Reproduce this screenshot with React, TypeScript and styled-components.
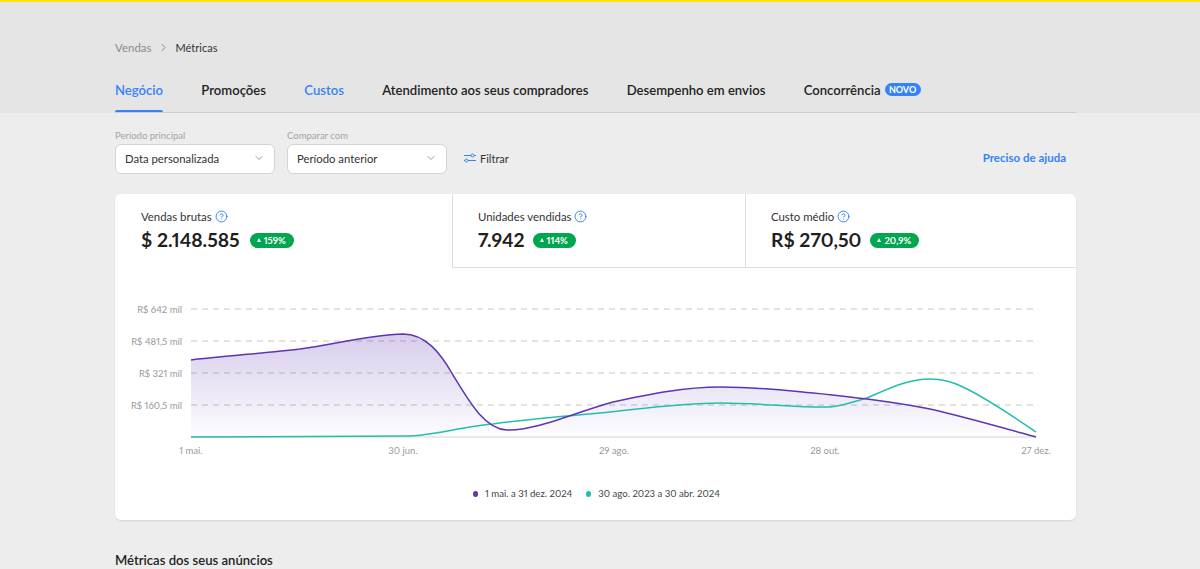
import React from "react";
import styled, { createGlobalStyle } from "styled-components";
import { ChevronDown, ChevronRight, CircleHelp } from "lucide-react";

const GlobalStyle = createGlobalStyle`
  html, body { margin: 0; height: 100%; overflow: hidden; background: #ededed; }
  body { font-family: "Lato", "Liberation Sans", sans-serif; color: #1f1f1f; font-variant-numeric: proportional-nums; }
`;

const blue = "#3483fa";

const Page = styled.div`
  border-top: 2px solid #ffe600;
  height: 567px;
  overflow: hidden;
`;

const Header = styled.header`
  background: #e5e5e5;
  height: 111px;
  padding-left: 115px;
  box-sizing: border-box;
  display: flex;
  flex-direction: column;
`;

const Breadcrumb = styled.nav`
  display: flex;
  align-items: center;
  height: 16px;
  margin-top: 37px;
  font-size: 11.5px;
  color: #8a8a8a;
  svg { margin: 0 6px 0 5px; color: #777; }
`;

const Current = styled.span`
  color: #333;
  font-size: 11px;
`;

const Tabs = styled.div`
  display: flex;
  gap: 38.3px;
  width: 961px;
  height: 58px;
  box-sizing: border-box;
  border-bottom: 1px solid #cfcfcf;
`;

const Tab = styled.div<{ $blue?: boolean; $active?: boolean }>`
  position: relative;
  display: flex;
  align-items: center;
  height: 57px;
  padding-top: 12px;
  box-sizing: border-box;
  font-size: 13.1px;
  font-weight: 600;
  white-space: nowrap;
  color: ${(p) => (p.$blue ? blue : "#222")};
  ${(p) =>
    p.$active &&
    `&::after {
      content: "";
      position: absolute;
      left: 0;
      right: 0;
      bottom: 0;
      height: 2px;
      border-radius: 2px 2px 0 0;
      background: ${blue};
    }`}
`;

const NewBadge = styled.span`
  margin-left: 4px;
  height: 13px;
  width: 36px;
  border-radius: 7px;
  background: ${blue};
  color: #fff;
  font-size: 9px;
  font-weight: 700;
  line-height: 13px;
  text-align: center;
`;

const Content = styled.main`
  margin-left: 115px;
  width: 961px;
`;

const FilterBar = styled.div`
  display: flex;
  align-items: flex-end;
  gap: 12px;
  height: 61px;
`;

const Field = styled.div`
  display: flex;
  flex-direction: column;
  gap: 2px;
`;

const FieldLabel = styled.label`
  font-size: 9.5px;
  line-height: 13px;
  color: #a3a3a3;
`;

const Select = styled.div`
  width: 160px;
  height: 30px;
  box-sizing: border-box;
  padding: 0 9px 2px 9px;
  display: flex;
  align-items: center;
  justify-content: space-between;
  background: #fff;
  border: 1px solid #d4d4d4;
  border-radius: 6px;
  font-size: 11.3px;
  color: #333;
  svg { color: #777; }
`;

const FilterButton = styled.div`
  display: flex;
  align-items: center;
  gap: 4px;
  height: 30px;
  padding-bottom: 2px;
  box-sizing: border-box;
  margin-left: 5px;
  font-size: 11px;
  color: #333;
`;

const HelpLink = styled.a`
  margin-left: auto;
  margin-right: 10px;
  height: 30px;
  line-height: 28px;
  font-size: 11.5px;
  font-weight: 700;
  color: ${blue};
`;

const Card = styled.section`
  margin-top: 20px;
  height: 326px;
  background: #fff;
  border-radius: 6px;
  box-shadow: 0 1px 2px rgba(0, 0, 0, 0.1);
  overflow: hidden;
`;

const Metrics = styled.div`
  display: grid;
  grid-template-columns: 337px 293px 331px;
  height: 74px;
`;

const Metric = styled.div<{ $selected?: boolean }>`
  box-sizing: border-box;
  padding: 15px 0 0 26px;
  ${(p) => !p.$selected && "border-bottom: 1px solid #dedede;"}
  & + & {
    border-left: 1px solid #dedede;
    padding-left: 25px;
  }
`;

const MetricLabel = styled.div`
  display: flex;
  align-items: center;
  gap: 3px;
  height: 15px;
  font-size: 11.4px;
  color: #333;
  svg { color: ${blue}; }
`;

const MetricValueRow = styled.div<{ $gap: number }>`
  display: flex;
  align-items: center;
  gap: ${(p) => p.$gap}px;
  margin-top: 4px;
`;

const MetricValue = styled.span`
  font-size: 19.3px;
  font-weight: 700;
  line-height: 24px;
  color: #1f1f1f;
`;

const UpBadge = styled.span`
  display: inline-flex;
  align-items: center;
  gap: 3px;
  height: 15px;
  padding: 0 8px 0 7px;
  border-radius: 8px;
  background: #00a650;
  color: #fff;
  font-size: 9.5px;
  font-weight: 700;
  &::before {
    content: "";
    border-left: 2.5px solid transparent;
    border-right: 2.5px solid transparent;
    border-bottom: 4px solid #fff;
  }
`;

const ChartSvg = styled.svg`
  display: block;
  width: 961px;
  height: 206px;
`;

const AxisText = styled.text`
  font-size: 9.5px;
  fill: #9a9a9a;
`;

const Legend = styled.div`
  display: flex;
  gap: 14px;
  margin-left: 358px;
  margin-top: 13px;
  font-size: 9.6px;
  line-height: 14px;
  color: #444;
`;

const LegendItem = styled.span<{ $color: string }>`
  display: flex;
  align-items: center;
  gap: 7px;
  &::before {
    content: "";
    width: 5px;
    height: 6px;
    border-radius: 50%;
    background: ${(p) => p.$color};
  }
`;

const SectionTitle = styled.h2`
  margin: 32px 0 0;
  font-size: 13.1px;
  font-weight: 600;
  line-height: 16px;
  color: #222;
`;

const yLabels = [
  { text: "R$ 642 mil", y: 309 },
  { text: "R$ 481,5 mil", y: 341 },
  { text: "R$ 321 mil", y: 373 },
  { text: "R$ 160,5 mil", y: 405 },
];

const xLabels = [
  { text: "1 mai.", x: 191 },
  { text: "30 jun.", x: 403 },
  { text: "29 ago.", x: 614 },
  { text: "28 out.", x: 825 },
  { text: "27 dez.", x: 1036 },
];

// page coordinates, the svg viewBox starts at the chart's top left corner
const purpleLine =
  "M191 360 C225 356 265 353 300 349 C335 344 370 335 403 334 C425 334 440 352 453 375 C470 403 485 429 507 430 C535 431 570 414 613 402 C650 394 685 387 720 387 C760 387 790 391 813 393 C835 395 850 397 867 399 C890 402 910 405 930 409 C965 417 1000 427 1036 437";
const tealLine =
  "M191 437 C270 437 340 437 410 436 C425 435 438 433 453 430 C465 428 480 425 493 424 C530 419 565 416 600 413 C640 409 680 403 720 403 C760 403 800 408 830 407 C842 406 853 402 867 398 C890 388 908 379 930 379 C945 379 955 383 963 387 C990 400 1012 416 1036 432";

const FilterIcon = () => (
  <svg width="12" height="10" viewBox="0 0 12 10" fill="none" stroke={blue} strokeWidth="1">
    <path d="M0 2.5H7M10 2.5H12M0 7.5H1M4 7.5H12" />
    <circle cx="8.5" cy="2.5" r="1.5" />
    <circle cx="2.5" cy="7.5" r="1.5" />
  </svg>
);

const App = () => {
  return (
    <Page>
      <GlobalStyle />
      <Header>
        <Breadcrumb>
          Vendas
          <ChevronRight size={13} strokeWidth={1.5} />
          <Current>Métricas</Current>
        </Breadcrumb>
        <Tabs>
          <Tab $blue $active>Negócio</Tab>
          <Tab>Promoções</Tab>
          <Tab $blue>Custos</Tab>
          <Tab>Atendimento aos seus compradores</Tab>
          <Tab>Desempenho em envios</Tab>
          <Tab>
            Concorrência
            <NewBadge>NOVO</NewBadge>
          </Tab>
        </Tabs>
      </Header>
      <Content>
        <FilterBar>
          <Field>
            <FieldLabel>Período principal</FieldLabel>
            <Select>
              Data personalizada
              <ChevronDown size={12} strokeWidth={1.5} />
            </Select>
          </Field>
          <Field>
            <FieldLabel>Comparar com</FieldLabel>
            <Select>
              Período anterior
              <ChevronDown size={12} strokeWidth={1.5} />
            </Select>
          </Field>
          <FilterButton>
            <FilterIcon />
            Filtrar
          </FilterButton>
          <HelpLink>Preciso de ajuda</HelpLink>
        </FilterBar>
        <Card>
          <Metrics>
            <Metric $selected>
              <MetricLabel>
                Vendas brutas
                <CircleHelp size={13} strokeWidth={1.8} />
              </MetricLabel>
              <MetricValueRow $gap={10}>
                <MetricValue>$ 2.148.585</MetricValue>
                <UpBadge>159%</UpBadge>
              </MetricValueRow>
            </Metric>
            <Metric>
              <MetricLabel>
                Unidades vendidas
                <CircleHelp size={13} strokeWidth={1.8} />
              </MetricLabel>
              <MetricValueRow $gap={8}>
                <MetricValue>7.942</MetricValue>
                <UpBadge>114%</UpBadge>
              </MetricValueRow>
            </Metric>
            <Metric>
              <MetricLabel>
                Custo médio
                <CircleHelp size={13} strokeWidth={1.8} />
              </MetricLabel>
              <MetricValueRow $gap={9}>
                <MetricValue>R$ 270,50</MetricValue>
                <UpBadge>20,9%</UpBadge>
              </MetricValueRow>
            </Metric>
          </Metrics>
          <ChartSvg viewBox="115 268 961 206">
            <defs>
              <linearGradient id="area" x1="0" y1="334" x2="0" y2="437" gradientUnits="userSpaceOnUse">
                <stop offset="0" stopColor="#5e35b1" stopOpacity="0.25" />
                <stop offset="1" stopColor="#5e35b1" stopOpacity="0.01" />
              </linearGradient>
            </defs>
            {yLabels.map((l) => (
              <g key={l.text}>
                <AxisText x={182} y={l.y + 3.5} textAnchor="end">{l.text}</AxisText>
                <line x1={191} x2={1033} y1={l.y} y2={l.y} stroke="#d9d9d9" strokeWidth={1.5} strokeDasharray="6 5" />
              </g>
            ))}
            <path d={`${purpleLine} L191 437 Z`} fill="url(#area)" />
            <line x1={191} x2={1036} y1={437} y2={437} stroke="#e2e2e2" strokeWidth={1.5} />
            <path d={tealLine} fill="none" stroke="#23bfac" strokeWidth={1.5} />
            <path d={purpleLine} fill="none" stroke="#5e35b1" strokeWidth={1.5} />
            {xLabels.map((l) => (
              <AxisText key={l.text} x={l.x} y={454} textAnchor="middle">{l.text}</AxisText>
            ))}
          </ChartSvg>
          <Legend>
            <LegendItem $color="#5e35b1">1 mai. a 31 dez. 2024</LegendItem>
            <LegendItem $color="#23bfac">30 ago. 2023 a 30 abr. 2024</LegendItem>
          </Legend>
        </Card>
        <SectionTitle>Métricas dos seus anúncios</SectionTitle>
      </Content>
    </Page>
  );
};

export default App;
